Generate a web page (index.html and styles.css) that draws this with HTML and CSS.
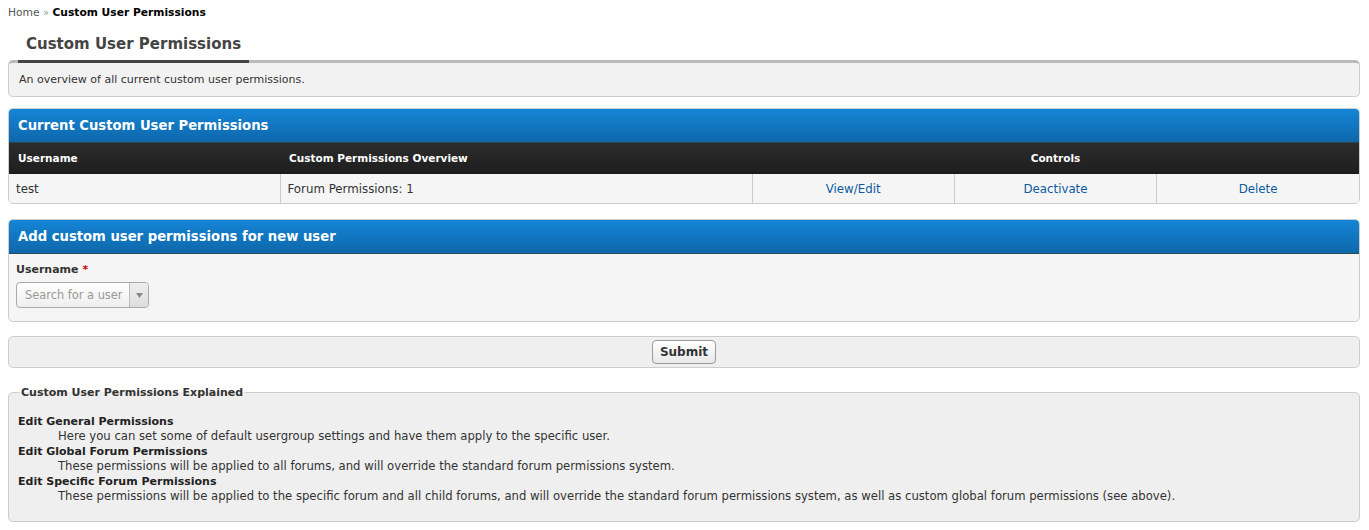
FILE: index.html
```html
<!DOCTYPE html>
<html>
<head>
<meta charset="utf-8">
<link rel="stylesheet" href="styles.css">
</head>
<body>
<div class="breadcrumb"><a href="#" class="crumb">Home</a> <span class="sep">»</span> <span class="active">Custom User Permissions</span></div>

<div class="tabs">
  <div class="tab">Custom User Permissions</div>
</div>
<div class="tab-desc">An overview of all current custom user permissions.</div>

<div class="box">
  <div class="box-head">Current Custom User Permissions</div>
  <table class="grid">
    <thead>
      <tr>
        <th class="c-user">Username</th>
        <th class="c-over">Custom Permissions Overview</th>
        <th colspan="3" class="c-ctrl">Controls</th>
      </tr>
    </thead>
    <tbody>
      <tr>
        <td class="c-user">test</td>
        <td class="c-over">Forum Permissions: 1</td>
        <td class="c-act"><a href="#">View/Edit</a></td>
        <td class="c-act"><a href="#">Deactivate</a></td>
        <td class="c-act"><a href="#">Delete</a></td>
      </tr>
    </tbody>
  </table>
</div>

<div class="box">
  <div class="box-head">Add custom user permissions for new user</div>
  <div class="form-body">
    <div class="label">Username <span class="req">*</span></div>
    <div class="select">
      <span class="select-text">Search for a user</span>
      <span class="select-arrow"><svg width="7" height="5" viewBox="0 0 7 5"><path d="M0 0h7L3.5 5z" fill="#888"/></svg></span>
    </div>
  </div>
</div>

<div class="buttons">
  <button class="submit" type="button">Submit</button>
</div>

<fieldset class="explain">
  <legend>Custom User Permissions Explained</legend>
  <dl>
    <dt>Edit General Permissions</dt>
    <dd>Here you can set some of default usergroup settings and have them apply to the specific user.</dd>
    <dt>Edit Global Forum Permissions</dt>
    <dd>These permissions will be applied to all forums, and will override the standard forum permissions system.</dd>
    <dt>Edit Specific Forum Permissions</dt>
    <dd>These permissions will be applied to the specific forum and all child forums, and will override the standard forum permissions system, as well as custom global forum permissions (see above).</dd>
  </dl>
</fieldset>
</body>
</html>
```

FILE: styles.css
```css
html, body {
  margin: 0;
  padding: 0;
  background: #fff;
}
body {
  padding: 0 9px 0 8px;
  font-family: "DejaVu Sans", Verdana, sans-serif;
  font-size: 11px;
  color: #333;
}
a { color: #0b5aa2; text-decoration: none; }

.breadcrumb {
  padding-top: 5px;
  height: 15px;
  line-height: 15px;
  font-size: 10.7px;
}
.breadcrumb .crumb { color: #555; }
.breadcrumb .sep { color: #999; font-size: 10px; }
.breadcrumb .active { color: #000; font-weight: bold; }

.tabs {
  display: flex;
  padding-left: 10px;
  margin-top: 16px;
  position: relative;
  z-index: 1;
}
.tab {
  box-sizing: border-box;
  width: 231px;
  padding: 0 8px;
  height: 27px;
  line-height: 17px;
  font-size: 15px;
  font-weight: bold;
  white-space: nowrap;
  color: #444;
  border-bottom: 3px solid #444;
  margin-bottom: -3px;
}
.tab-desc {
  background: #f2f2f2;
  border: 1px solid #ccc;
  border-top: 3px solid #bbb;
  border-radius: 5px;
  height: 33px;
  line-height: 34px;
  padding: 0 10px;
  color: #333;
}

.box {
  margin-top: 11px;
  border: 1px solid #ccc;
  border-radius: 5px;
  background: #f5f5f5;
  overflow: hidden;
}
.box + .box { margin-top: 15px; }
.box-head {
  height: 33px;
  line-height: 33px;
  padding: 0 9px;
  background: linear-gradient(#1585d7, #0e67aa);
  color: #fff;
  font-weight: bold;
  font-size: 13.2px;
  border-bottom: 1px solid #2a4950;
}
.grid {
  width: 100%;
  border-collapse: collapse;
  table-layout: fixed;
}
.grid th {
  height: 30px;
  padding: 0 9px;
  background: linear-gradient(#2d2d2d, #1e1e1e);
  color: #fff;
  font-weight: bold;
  text-align: left;
  font-size: 10.5px;
}
.grid th.c-ctrl { text-align: center; }
.grid td {
  height: 29px;
  padding: 0 7px;
  background: #f5f5f5;
  color: #333;
  font-size: 11.8px;
  border-top: 1px solid #1a1a1a;
}
.grid td + td { border-left: 1px solid #ccc; }
.grid .c-user { width: 253px; }
.grid .c-over { width: 454px; }
.grid td.c-act { text-align: center; }

.form-body {
  padding: 8px 7px 13px;
}
.label {
  font-weight: bold;
  color: #333;
  height: 15px;
  line-height: 15px;
  margin-bottom: 5px;
}
.req { color: #c00; }
.select {
  display: inline-flex;
  align-items: stretch;
  height: 24px;
  border: 1px solid #aaa;
  border-radius: 4px;
  background: linear-gradient(#fff, #eee);
  color: #999;
  font-size: 11.4px;
}
.select-text {
  padding: 0 7px 0 8px;
  line-height: 24px;
}
.select-arrow {
  width: 18px;
  border-left: 1px solid #bbb;
  display: flex;
  align-items: center;
  justify-content: center;
  background: linear-gradient(#eee, #ddd);
  border-radius: 0 4px 4px 0;
}

.buttons {
  margin-top: 14px;
  background: #efefef;
  border: 1px solid #ccc;
  border-radius: 5px;
  height: 30px;
  display: flex;
  align-items: center;
  justify-content: center;
}
.submit {
  font-family: "DejaVu Sans", Verdana, sans-serif;
  font-size: 12px;
  font-weight: bold;
  color: #333;
  height: 24px;
  padding: 0 7px;
  border: 1px solid #999;
  border-radius: 4px;
  background: linear-gradient(#fff, #e8e8e8);
}

.explain {
  margin: 18px 0 0;
  padding: 15px 9px 17px;
  border: 1px solid #ccc;
  border-radius: 5px;
  background: #efefef;
}
.explain legend {
  font-weight: bold;
  color: #333;
  padding: 0 2px;
  margin-left: 1px;
  font-size: 11px;
}
.explain dl { margin: 0; line-height: 15px; }
.explain dt { font-weight: bold; color: #222; }
.explain dd { margin-left: 40px; color: #333; font-size: 11.65px; }
```
